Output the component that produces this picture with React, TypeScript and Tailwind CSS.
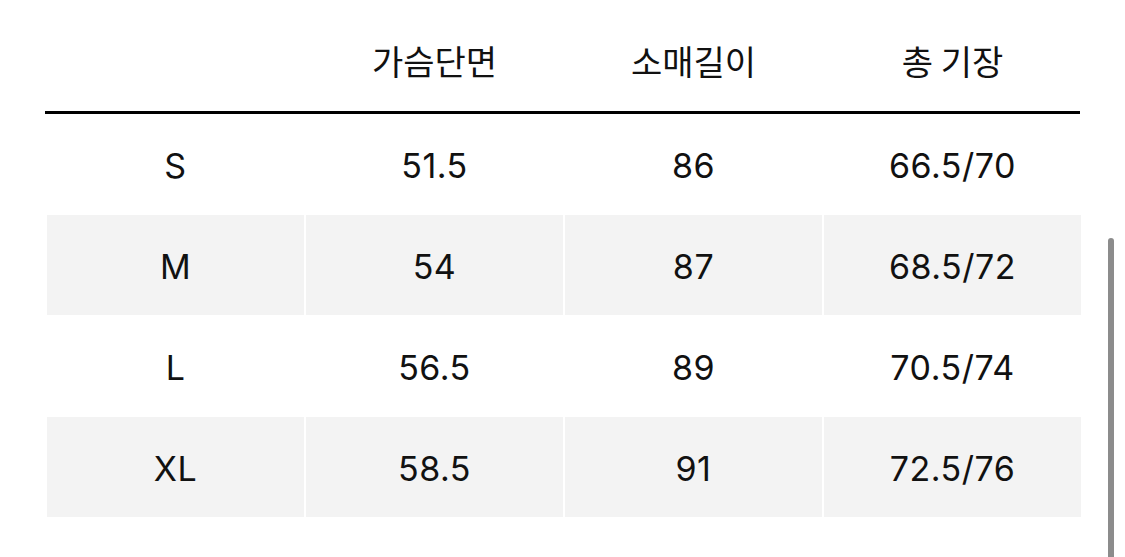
const headers = ["가슴단면", "소매길이", "총 기장"]

const rows = [
  { size: "S", chest: "51.5", sleeve: "86", length: "66.5/70" },
  { size: "M", chest: "54", sleeve: "87", length: "68.5/72" },
  { size: "L", chest: "56.5", sleeve: "89", length: "70.5/74" },
  { size: "XL", chest: "58.5", sleeve: "91", length: "72.5/76" },
]

export default function App() {
  return (
    <div className="relative h-[557px] w-[1125px] overflow-hidden bg-white text-[#111]">
      <div className="ml-[45px] w-[1036px]">
        <div className="grid h-[111px] grid-cols-4 gap-x-[2px] pl-[2px] pb-[2px]">
          <div />
          {headers.map((h) => (
            <div
              key={h}
              className="flex items-center justify-center pt-[12px] font-['Noto_Sans_CJK_KR',sans-serif] text-[34px]"
            >
              {h}
            </div>
          ))}
        </div>
        <div className="h-[3px] w-[1035px] bg-black" />
        <div className="flex flex-col gap-y-[1px] pl-[2px]">
          {rows.map((r, i) => (
            <div key={r.size} className="grid h-[100px] grid-cols-4 gap-x-[2px]">
              {[r.size, r.chest, r.sleeve, r.length].map((v, j) => (
                <div
                  key={j}
                  className={`flex items-center justify-center pt-[3px] font-['Inter',sans-serif] text-[34px] tracking-[0.5px] ${
                    i % 2 === 1 ? "bg-[#f3f3f3]" : "bg-white"
                  }`}
                >
                  {v}
                </div>
              ))}
            </div>
          ))}
        </div>
      </div>
      <div className="absolute left-[1108px] top-[238px] h-[330px] w-[6px] rounded-full bg-[#8c8c8c]" />
    </div>
  )
}
